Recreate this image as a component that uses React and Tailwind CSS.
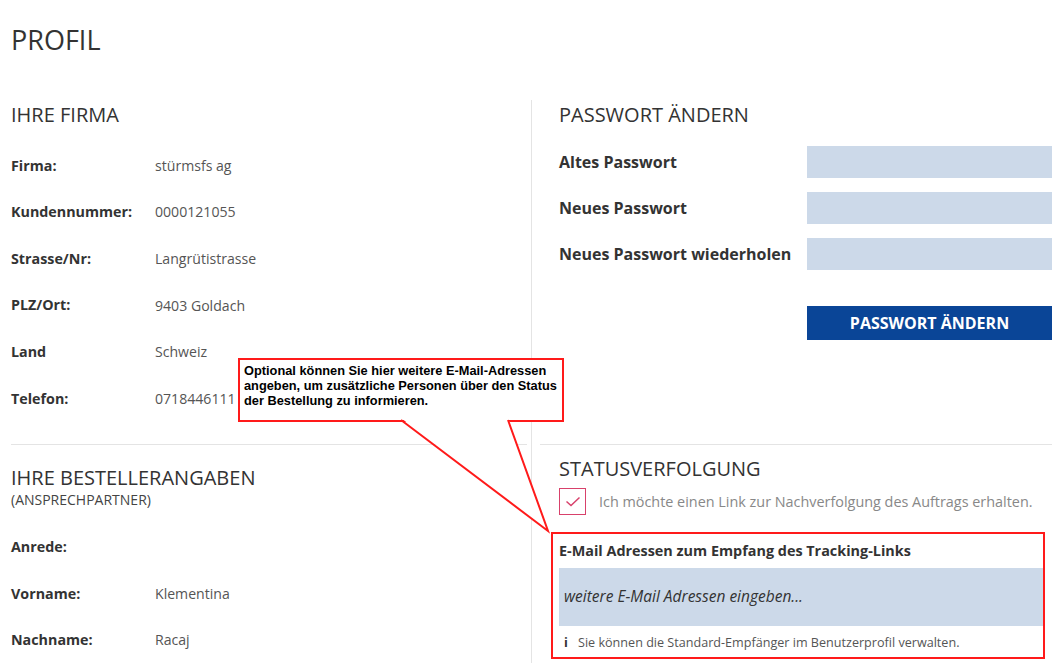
import { Fragment } from "react";

const firma = [
  ["Firma:", "stürmsfs ag"],
  ["Kundennummer:", "0000121055"],
  ["Strasse/Nr:", "Langrütistrasse"],
  ["PLZ/Ort:", "9403 Goldach"],
  ["Land", "Schweiz"],
  ["Telefon:", "0718446111"],
];

const besteller = [
  ["Anrede:", ""],
  ["Vorname:", "Klementina"],
  ["Nachname:", "Racaj"],
];

const passwort = ["Altes Passwort", "Neues Passwort", "Neues Passwort wiederholen"];

function InfoRow({ label, value }) {
  return (
    <div className="flex h-[46.6px] items-center">
      <span className="w-[144px] text-[14.3px] font-bold text-[#333]">{label}</span>
      <span className="text-[14.1px] text-[#555]">{value}</span>
    </div>
  );
}

export default function App() {
  return (
    <div className="relative h-[669px] w-[1056px] overflow-hidden bg-white font-['Open_Sans',sans-serif] text-[#333]">
      {/* Header */}
      <h1 className="pl-[11px] pt-[20px] text-[27px] leading-[40px] text-[#333]">PROFIL</h1>

      <div className="mt-[40px] flex">
        {/* Linke Spalte */}
        <div className="w-[532px] border-r border-[#e4e4e4] pl-[11px] pr-[4px]">
          <h2 className="text-[20px] leading-[30px]">IHRE FIRMA</h2>
          <div className="mt-[12px]">
            {firma.map(([l, v]) => (
              <InfoRow key={l} label={l} value={v} />
            ))}
          </div>
          <div className="mt-[22px] border-t border-[#e4e4e4]" />
          <h2 className="mt-[18px] text-[20px] leading-[30px]">IHRE BESTELLERANGABEN</h2>
          <p className="text-[14px] leading-[14px] text-[#444]">(ANSPRECHPARTNER)</p>
          <div className="mt-[17px]">
            {besteller.map(([l, v]) => (
              <InfoRow key={l} label={l} value={v} />
            ))}
          </div>
        </div>

        {/* Rechte Spalte */}
        <div className="flex-1 pl-[8px] pr-[4px]">
          <div className="pl-[19px]">
            <h2 className="text-[20px] leading-[30px]">PASSWORT ÄNDERN</h2>
            <div className="mt-[16px] flex flex-col gap-[14px]">
              {passwort.map((l) => (
                <div key={l} className="flex items-center">
                  <span className="w-[248px] text-[16px] font-bold text-[#333]">{l}</span>
                  <div className="h-[32px] flex-1 bg-[#ccd9e9]" />
                </div>
              ))}
            </div>
            <div className="mt-[36px] flex justify-end">
              <button className="h-[34px] w-[245px] bg-[#0a4597] text-[16px] font-bold text-white">
                PASSWORT ÄNDERN
              </button>
            </div>
          </div>

          <div className="mt-[104px] border-t border-[#e4e4e4]" />

          <div className="pl-[19px]">
            <h2 className="mt-[9px] text-[20px] leading-[30px]">STATUSVERFOLGUNG</h2>
            <div className="mt-[4px] flex items-center gap-[13px]">
              <div className="flex h-[27px] w-[27px] items-center justify-center border-[1.5px] border-[#d8416b]">
                <svg width="16" height="12" viewBox="0 0 16 12" fill="none">
                  <path d="M1.5 5.5 L6 9.5 L14.5 1.5" stroke="#d8416b" strokeWidth="1.5" />
                </svg>
              </div>
              <span className="text-[14.4px] text-[#888]">
                Ich möchte einen Link zur Nachverfolgung des Auftrags erhalten.
              </span>
            </div>
          </div>

          <div className="ml-[11px] mr-[7px] mt-[17px] h-[127px] border-2 border-[#ff1a1a] pl-[6px]">
            <p className="pt-[8px] text-[14.4px] font-bold leading-[18px] text-[#333]">
              E-Mail Adressen zum Empfang des Tracking-Links
            </p>
            <div className="mt-[8px] flex h-[58px] items-center bg-[#ccd9e9] pl-[5px] text-[15.5px] italic text-[#333]">
              weitere E-Mail Adressen eingeben...
            </div>
            <p className="mt-[8px] flex items-center text-[12.6px] leading-[18px] text-[#555]">
              <span className="w-[13px] pl-[5px] font-bold text-[#333]">i</span>
              <span className="pl-[6px]">Sie können die Standard-Empfänger im Benutzerprofil verwalten.</span>
            </p>
          </div>
        </div>
      </div>

      {/* Hinweis-Callout */}
      <div className="absolute left-[238px] top-[358px] h-[64px] w-[326px] border-2 border-[#ff1a1a] bg-white pl-[4px] pt-[3px] font-['Liberation_Sans',Arial,sans-serif] text-[12.8px] font-bold leading-[15px] text-black">
        Optional können Sie hier weitere E-Mail-Adressen
        <br />
        angeben, um zusätzliche Personen über den Status
        <br />
        der Bestellung zu informieren.
      </div>
      <svg className="absolute left-[390px] top-[414px]" width="170" height="122" viewBox="0 0 170 122" fill="none">
        <polygon points="11,4 118,4 158,117" fill="white" />
        <polyline points="11,6 158,117 118,6" stroke="#ff1a1a" strokeWidth="2" />
      </svg>
    </div>
  );
}
